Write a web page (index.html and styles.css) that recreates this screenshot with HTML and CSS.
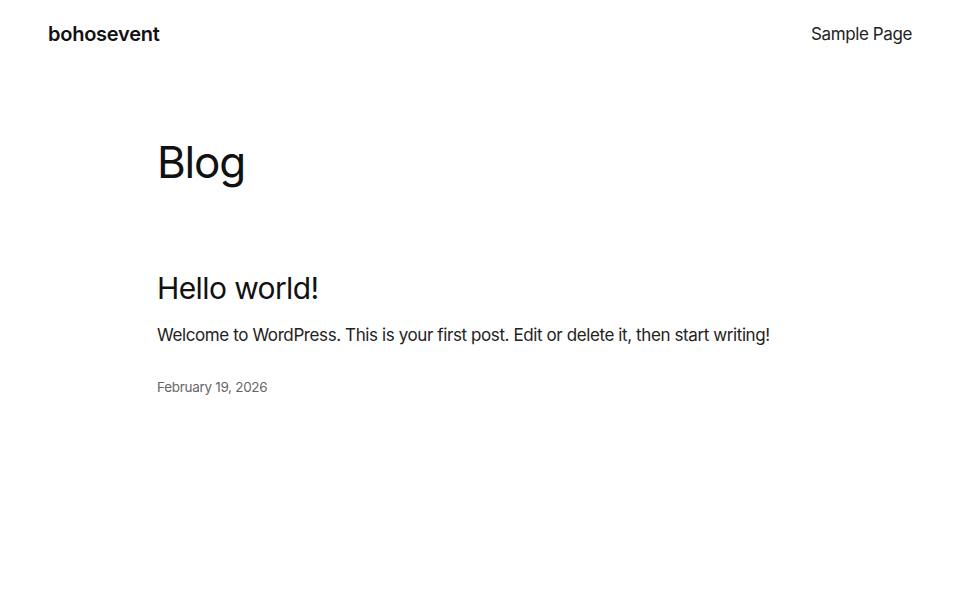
FILE: index.html
```html
<!DOCTYPE html>
<html lang="en">
<head>
<meta charset="utf-8">
<title>Blog – bohosevent</title>
<link rel="stylesheet" href="styles.css">
</head>
<body>
<header class="site-header">
  <a class="site-title" href="#">bohosevent</a>
  <nav class="site-nav"><a href="#">Sample Page</a></nav>
</header>
<main class="content">
  <h1 class="page-title">Blog</h1>
  <article class="post">
    <h2 class="post-title"><a href="#">Hello world!</a></h2>
    <p class="post-excerpt">Welcome to WordPress. This is your first post. Edit or delete it, then start writing!</p>
    <p class="post-date">February 19, 2026</p>
  </article>
</main>
</body>
</html>
```

FILE: styles.css
```css
* { box-sizing: border-box; }
html, body { margin: 0; padding: 0; background: #fff; }
body {
  font-family: "Inter", "Liberation Sans", sans-serif;
  color: #111;
}
a { color: inherit; text-decoration: none; }
.site-header {
  display: flex;
  justify-content: space-between;
  align-items: center;
  padding: 10px 48px 0;
  height: 58px;
}
.site-title {
  font-size: 20px;
  font-weight: 600;
  letter-spacing: -0.25px;
}
.site-nav a {
  font-size: 17px;
  font-weight: 400;
  letter-spacing: -0.4px;
  color: #222;
}
.content {
  width: 646px;
  margin: 0 auto;
  padding-top: 78px;
}
.page-title {
  margin: 0;
  font-size: 44px;
  font-weight: 400;
  letter-spacing: -1.2px;
  line-height: 1.2;
}
.post { margin-top: 81px; }
.post-title {
  margin: 0;
  font-size: 30px;
  font-weight: 400;
  letter-spacing: -0.6px;
  line-height: 1.2;
}
.post-excerpt {
  margin: 17px 0 0;
  font-size: 17px;
  letter-spacing: -0.4px;
  line-height: 1.5;
  color: #222;
}
.post-date {
  margin: 31px 0 0;
  font-size: 13.5px;
  color: #666;
  letter-spacing: -0.3px;
}
```
